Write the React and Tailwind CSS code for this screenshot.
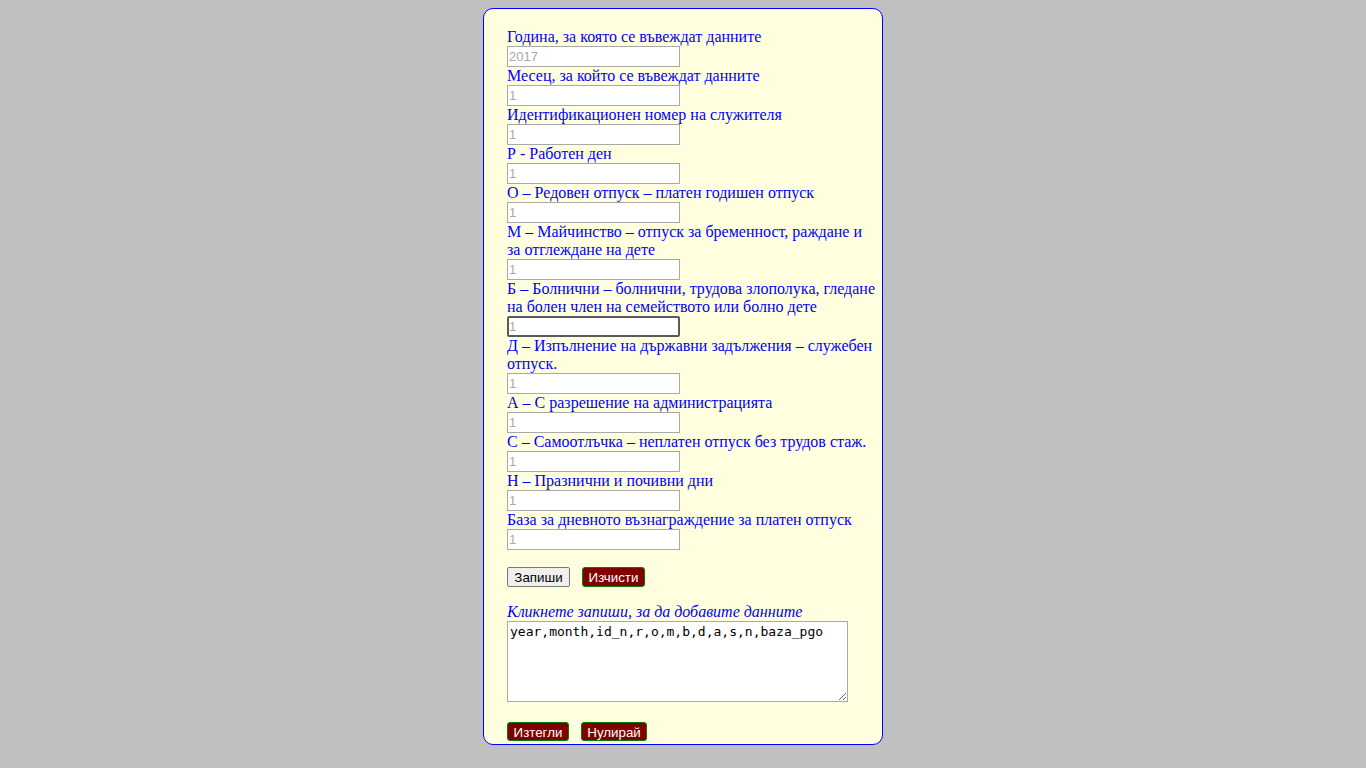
import React from 'react';

const fields = [
  { label: 'Година, за която се въвеждат данните', ph: '2017' },
  { label: 'Месец, за който се въвеждат данните', ph: '1' },
  { label: 'Идентификационен номер на служителя', ph: '1' },
  { label: 'Р - Работен ден', ph: '1' },
  { label: 'О – Редовен отпуск – платен годишен отпуск', ph: '1' },
  { label: 'М – Майчинство – отпуск за бременност, раждане и за отглеждане на дете', ph: '1' },
  { label: 'Б – Болнични – болнични, трудова злополука, гледане на болен член на семейството или болно дете', ph: '1', focus: true },
  { label: 'Д – Изпълнение на държавни задължения – служебен отпуск.', ph: '1' },
  { label: 'А – С разрешение на администрацията', ph: '1' },
  { label: 'С – Самоотлъчка – неплатен отпуск без трудов стаж.', ph: '1' },
  { label: 'Н – Празнични и почивни дни', ph: '1' },
  { label: 'База за дневното възнаграждение за платен отпуск', ph: '1' },
];

function Field({ label, ph, focus }) {
  return (
    <div className="flex flex-col items-start">
      <label className="text-[16px] leading-[18px] text-[#0000ff]">{label}</label>
      <input
        type="text"
        placeholder={ph}
        className={
          'w-[173px] h-[21px] bg-white px-[1px] text-[13px] font-["Liberation_Sans",Arial,sans-serif] text-black placeholder:text-[#a9a9a9] outline-none ' +
          (focus ? 'border-2 border-[#5a5a5a] rounded-[2px] pl-0' : 'border border-[#a9a9a9]')
        }
      />
    </div>
  );
}

export default function App() {
  return (
    <div className="min-h-screen bg-[#c0c0c0] pt-[8px] font-['Liberation_Serif','Times_New_Roman',serif]">
      <div className="mx-auto w-[400px] h-[737px] rounded-[10px] border border-[#0000ff] bg-[#ffffe0] pl-[23px] pt-[19px]">
        <div className="w-[370px] flex flex-col">
          {fields.map((f) => (
            <Field key={f.label} {...f} />
          ))}

          <div className="mt-[17px] flex gap-[12px] font-['Liberation_Sans',Arial,sans-serif] text-[13.33px]">
            <button className="h-[20px] w-[63px] rounded-[2px] border border-[#767676] bg-[#efefef] text-black">
              Запиши
            </button>
            <button className="h-[20px] w-[63px] rounded-[3px] border border-[#008000] bg-[#800000] text-white">
              Изчисти
            </button>
          </div>

          <div className="mt-[15px] text-[16px] leading-[19px] italic text-[#0000ff]">
            Кликнете запиши, за да добавите данните
          </div>
          <textarea
            readOnly
            defaultValue="year,month,id_n,r,o,m,b,d,a,s,n,baza_pgo"
            className="block w-[341px] h-[81px] border border-[#a9a9a9] bg-white p-[2px] font-['DejaVu_Sans_Mono',monospace] text-[13px] leading-[16px] text-black outline-none"
          />

          <div className="mt-[20px] flex gap-[12px] font-['Liberation_Sans',Arial,sans-serif] text-[13.33px]">
            <button className="h-[19px] w-[62px] rounded-[3px] border border-[#008000] bg-[#800000] text-white">
              Изтегли
            </button>
            <button className="h-[19px] w-[66px] rounded-[3px] border border-[#008000] bg-[#800000] text-white">
              Нулирай
            </button>
          </div>
        </div>
      </div>
    </div>
  );
}
